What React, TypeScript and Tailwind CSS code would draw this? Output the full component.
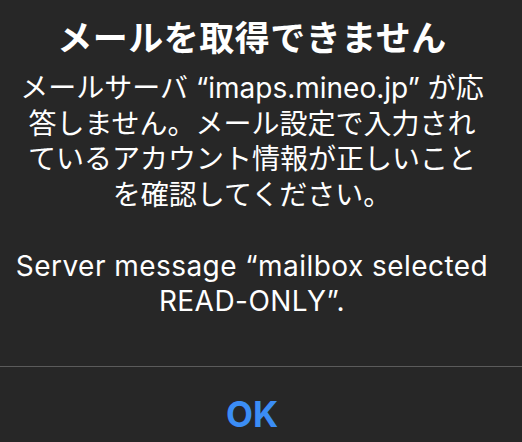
export default function App() {
  return (
    <div
      className="w-[522px] h-[442px] overflow-hidden bg-[#272727] text-white flex flex-col pr-[18px]"
      style={{ fontFamily: 'Inter, "Noto Sans CJK JP", sans-serif' }}
    >
      <div className="pt-[17px] text-center">
        <h1 className="text-[35px] leading-[42px] font-bold tracking-[0.5px]">
          メールを取得できません
        </h1>
        <p className="mt-[12px] text-[28px] leading-[35.5px] font-normal">
          メールサーバ “imaps.mineo.jp” が応
          <br />
          答しません。メール設定で入力され
          <br />
          ているアカウント情報が正しいこと
          <br />
          を確認してください。
          <br />
          <br />
          <span className="tracking-[0.45px]">
            Server message “mailbox selected
            <br />
            READ-ONLY”.
          </span>
        </p>
      </div>
      <div className="mt-auto">
        <div className="h-px bg-[#5b5b5b] -mr-[18px]" />
        <div className="h-[75px] flex items-center justify-center pt-[20px]">
          <span className="text-[35px] font-bold text-[#3b8df5] leading-none">OK</span>
        </div>
      </div>
    </div>
  );
}
